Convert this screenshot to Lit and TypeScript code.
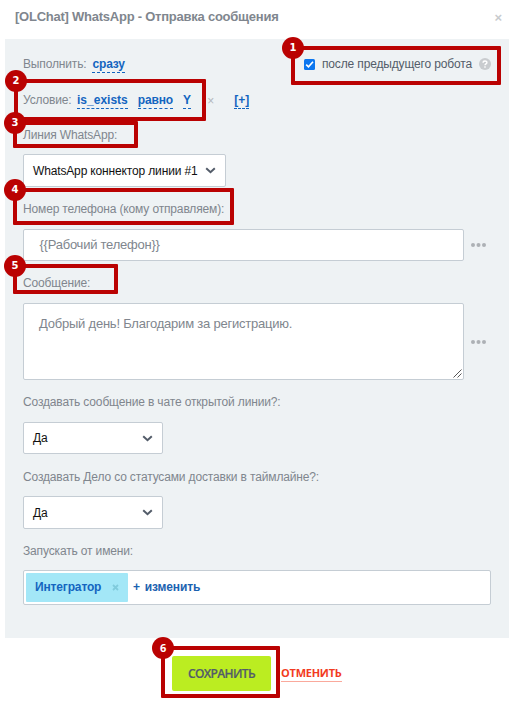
import { LitElement, html, css, svg } from "lit";
import { customElement, property } from "lit/decorators.js";
import { styleMap } from "lit/directives/style-map.js";

@customElement("step-marker")
class StepMarker extends LitElement {
  @property({ type: Number }) step = 0;
  @property({ type: Array }) box: number[] = [0, 0, 0, 0];
  static styles = css`
    .frame { position: absolute; box-sizing: border-box; border: 4px solid #ba0202; border-radius: 1px; pointer-events: none; }
    .badge { position: absolute; left: -13px; top: -13px; width: 22px; height: 22px; border-radius: 50%; background: #ba0202;
      color: #fff; font: bold 11px/22px "Open Sans", "DejaVu Sans", sans-serif; text-align: center; }
    .slab { font-family: "DejaVu Sans", sans-serif; font-size: 10px; }
  `;
  render() {
    const [x, y, w, h] = this.box;
    return html`<div class="frame" style=${styleMap({ left: x + "px", top: y + "px", width: w + "px", height: h + "px" })}>
      <div class="badge ${this.step < 6 ? "slab" : ""}">${this.step}</div></div>`;
  }
}

const chevron = svg`<path d="M1.2 1.3 5.5 5.2 9.8 1.3" fill="none" stroke="#535c69" stroke-width="2"/>`;

@customElement("app-root")
class AppRoot extends LitElement {
  static styles = css`
    :host { display: block; position: relative; width: 515px; height: 701px; overflow: hidden; background: #fff;
      font: 12px/16px "Liberation Sans", Arial, sans-serif; letter-spacing: -0.15px; color: #80868e; }
    * { box-sizing: border-box; white-space: nowrap; }
    .head { height: 39px; padding: 9px 13px 0 15px; display: flex; justify-content: space-between; font-size: 13px; font-weight: bold; color: #80868e; }
    .title { letter-spacing: -0.24px; }
    .close { font-size: 13px; font-weight: bold; color: #c8cbce; padding-top: 1px; }
    .panel { margin-left: 5px; width: 504px; height: 599px; padding: 7px 18px 0; background: #eef2f4; }
    .row { display: flex; align-items: center; height: 36px; }
    .link { font-weight: bold; color: #1365c0; border-bottom: 1px dashed #1365c0; line-height: 16px; height: 17px; }
    .first { margin-left: 6px; }
    .name { margin-left: 5.5px; letter-spacing: 0; }
    .gap { margin-left: 10px; }
    .remove { margin: 2px 0 0 16.5px; color: #b4b8bd; font-size: 12px; }
    .plus { margin-left: 20px; letter-spacing: 0; }
    .previous { margin-left: auto; display: flex; align-items: center; color: #535c69; }
    .check { width: 11px; height: 11px; margin-right: 7px; }
    .help { width: 12px; height: 12px; margin-left: 7px; }
    .label { display: flex; align-items: center; }
    .l1 { height: 36px; padding-bottom: 2px; }
    .l2 { height: 42px; padding-top: 2px; }
    .l3 { height: 42px; padding-top: 2px; }
    .l4 { height: 42px; padding-top: 2px; }
    .l5 { height: 42px; padding-top: 4px; }
    .l6 { height: 41px; padding-top: 3px; }
    .field { display: flex; align-items: center; background: #fff; border: 1px solid #c5cdd4; border-radius: 2px; }
    .select { justify-content: space-between; height: 33px; padding: 0 9px; color: #111; }
    .select.low { height: 32px; }
    .select svg { width: 11px; height: 7px; }
    .line { width: 203px; }
    .short { width: 140px; }
    .entry { display: flex; align-items: center; gap: 7px; }
    .input { width: 441px; height: 32px; padding-left: 15.5px; font-size: 13px; letter-spacing: -0.24px; }
    .area { position: relative; width: 441px; height: 77px; padding: 12px 15px; align-items: flex-start; font-size: 13px; letter-spacing: -0.22px; }
    .grip { position: absolute; right: 1px; bottom: 1px; width: 9px; height: 9px; }
    .dots { width: 15px; height: 4px; }
    .users { width: 468px; height: 35px; padding-left: 2px; }
    .tag { display: flex; align-items: center; justify-content: space-between; width: 102px; height: 29px; padding: 0 9px 1px; background: #a3e7f7; border-radius: 1px; color: #1365c0; font-weight: bold; }
    .tag svg { width: 7px; height: 7px; }
    .change { display: flex; gap: 5px; margin-left: 5px; padding-bottom: 1px; font-weight: bold; color: #1b62b0; }
    .foot { display: flex; padding: 18px 0 0 172px; }
    .save { width: 99px; height: 35px; background: #bbed21; border-radius: 2px; text-align: center; font: 600 12px/36px "Open Sans", sans-serif; letter-spacing: -0.65px; color: #535c69; -webkit-text-stroke: 0.2px #535c69; }
    .cancel { margin: 8px 0 0 10px; height: 18px; font: 700 11px/17px "Open Sans", sans-serif; letter-spacing: -0.25px; color: #f23b22; border-bottom: 1px solid #faa99c; }
  `;
  dots() {
    return html`<svg class="dots" viewBox="0 0 15 4"><g fill="#adb1b5"><circle cx="2" cy="2" r="2"/><circle cx="7.5" cy="2" r="2"/><circle cx="13" cy="2" r="2"/></g></svg>`;
  }
  select(text: string, size: string) {
    return html`<div class="field select ${size}"><span>${text}</span><svg viewBox="0 0 11 7">${chevron}</svg></div>`;
  }
  render() {
    return html`
      <div class="head"><span class="title">[OLChat] WhatsApp - Отправка сообщения</span><span class="close">×</span></div>
      <div class="panel">
        <div class="row">
          <span>Выполнить:</span><span class="link first">сразу</span>
          <div class="previous">
            <svg class="check" viewBox="0 0 11 11"><rect width="11" height="11" rx="1.5" fill="#0b76ef"/><path d="M2.2 5.6 4.5 7.9 9 2.8" fill="none" stroke="#fff" stroke-width="1.6"/></svg>
            <span>после предыдущего робота</span>
            <svg class="help" viewBox="0 0 12 12"><circle cx="6" cy="6" r="6" fill="#c9cccf"/><path d="M4.1 4.7C4.1 2.3 8 2.4 7.9 4.6 7.8 5.9 6 5.8 6 7.3M6 8.3v1.5" fill="none" stroke="#fff" stroke-width="1.4"/></svg>
          </div>
        </div>
        <div class="row">
          <span>Условие:</span><span class="link name">is_exists</span><span class="link gap">равно</span><span class="link gap">Y</span>
          <span class="remove">×</span><span class="link plus">[+]</span>
        </div>
        <div class="label l1">Линия WhatsApp:</div>
        ${this.select("WhatsApp коннектор линии #1", "line")}
        <div class="label l2">Номер телефона (кому отправляем):</div>
        <div class="entry"><div class="field input">{{Рабочий телефон}}</div>${this.dots()}</div>
        <div class="label l3">Сообщение:</div>
        <div class="entry"><div class="field area">Добрый день! Благодарим за регистрацию.
          <svg class="grip" viewBox="0 0 9 9"><path d="M.5 8.5l8-8M4.5 8.5l4-4" stroke="#444" stroke-width=".9"/></svg></div>${this.dots()}</div>
        <div class="label l4">Создавать сообщение в чате открытой линии?:</div>
        ${this.select("Да", "short low")}
        <div class="label l5">Создавать Дело со статусами доставки в таймлайне?:</div>
        ${this.select("Да", "short")}
        <div class="label l6">Запускать от имени:</div>
        <div class="field users">
          <div class="tag"><span>Интегратор</span><svg viewBox="0 0 7 7"><path d="M1 1l5 5M6 1 1 6" stroke="#80cbdc" stroke-width="1.8"/></svg></div>
          <div class="change"><span>+</span><span>изменить</span></div>
        </div>
      </div>
      <div class="foot"><div class="save">СОХРАНИТЬ</div><div class="cancel">ОТМЕНИТЬ</div></div>
      ${[[291, 46, 210, 39], [14, 79, 192, 42], [13, 121, 125, 27], [13, 188, 221, 37], [13, 264, 105, 30], [161, 646, 119, 52]].map(
        (box, i) => html`<step-marker .step=${i + 1} .box=${box}></step-marker>`
      )}
    `;
  }
}
